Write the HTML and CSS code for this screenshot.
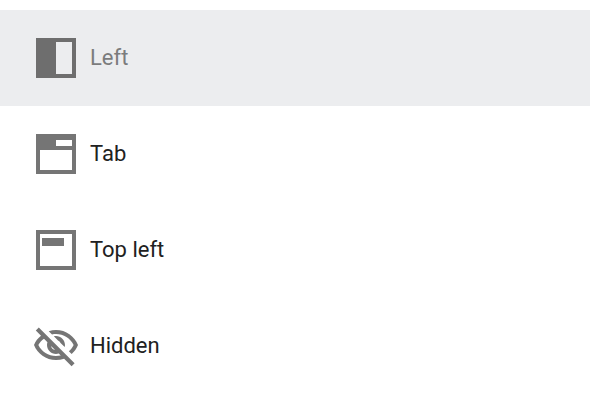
FILE: index.html
```html
<!DOCTYPE html>
<html lang="en">
<head>
    <meta charset="UTF-8">
    <meta name="viewport" content="width=device-width, initial-scale=1.0">
    <title>Position</title>
    <link rel="stylesheet" href="styles.css">
</head>
<body>
    <div class="menu">
        <button class="option selected" type="button">
            <svg class="icon" viewBox="0 0 48 48" aria-hidden="true">
                <path fill-rule="evenodd" d="M4 4h40v40H4zM24 8v32h16V8z"/>
            </svg>
            <span>Left</span>
        </button>
        <button class="option" type="button">
            <svg class="icon" viewBox="0 0 48 48" aria-hidden="true">
                <path fill-rule="evenodd" d="M4 4h40v40H4zM24 10v6h16v-6zM8 20v20h32V20z"/>
            </svg>
            <span>Tab</span>
        </button>
        <button class="option" type="button">
            <svg class="icon" viewBox="0 0 48 48" aria-hidden="true">
                <path fill-rule="evenodd" d="M4 4h40v40H4zM8 8v32h32V8zM10 12h22v8H10z"/>
            </svg>
            <span>Top left</span>
        </button>
        <button class="option" type="button">
            <svg class="icon" viewBox="0 0 24 24" aria-hidden="true">
                <path d="M12 6c3.79 0 7.17 2.13 8.82 5.5-.59 1.22-1.42 2.27-2.41 3.12l1.41 1.41c1.39-1.23 2.49-2.77 3.18-4.53C21.27 7.11 17 4 12 4c-1.27 0-2.49.2-3.64.57l1.65 1.65C10.66 6.09 11.32 6 12 6zm-1.07 1.14L13 9.21c.57.25 1.03.71 1.28 1.28l2.07 2.07c.08-.34.14-.7.14-1.07C16.5 9.01 14.48 7 12 7c-.37 0-.72.05-1.07.14z"/>
                <path fill-rule="evenodd" d="M1.9 4.3l2.6 2.6C2.96 8.1 1.74 9.64 1 11.5 2.73 15.89 7 19 12 19c1.41 0 2.78-.23 4.06-.64l3.74 3.74 1.5-1.5L3.4 2.8zM6 8.4l1.72 1.72c-.14.44-.22.9-.22 1.38 0 2.48 2.02 4.5 4.5 4.5.48 0 .95-.08 1.38-.22l1 1c-.77.14-1.57.22-2.38.22-3.79 0-7.17-2.13-8.82-5.5.66-1.24 1.66-2.34 2.82-3.1zM9.54 11.94l2.02 2.02c-1.06-.18-1.88-1-2.02-2.02z"/>
            </svg>
            <span>Hidden</span>
        </button>
    </div>
</body>
</html>
```
FILE: styles.css
```css
body {
    margin: 0;
    background-color: #fff;
    font-family: Roboto, Arial, sans-serif;
}

.menu {
    display: flex;
    flex-direction: column;
    padding: 10px 0;
}

.option {
    display: flex;
    align-items: center;
    gap: 10px;
    width: 100%;
    padding: 24px 32px;
    border: none;
    background-color: transparent;
    color: #212121;
    font-family: inherit;
    font-size: 22px;
    line-height: 32px;
    text-align: left;
    cursor: pointer;
}

.option:hover {
    background-color: #f5f5f5;
}

.option.selected {
    background-color: #ecedef;
    color: #7b7c7d;
    cursor: default;
}

.icon {
    width: 48px;
    height: 48px;
    flex-shrink: 0;
    fill: #757575;
}

.selected .icon {
    fill: #6e6e6e;
}
```
